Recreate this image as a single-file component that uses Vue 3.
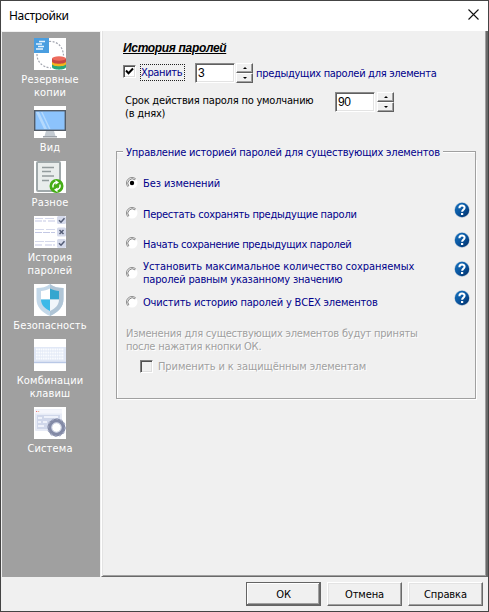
<script setup>
import { ref } from 'vue'

const sections = [
  { icon: 'backup', lines: ['Резервные', 'копии'] },
  { icon: 'view', lines: ['Вид'] },
  { icon: 'misc', lines: ['Разное'] },
  { icon: 'history', lines: ['История', 'паролей'] },
  { icon: 'security', lines: ['Безопасность'] },
  { icon: 'keys', lines: ['Комбинации', 'клавиш'] },
  { icon: 'system', lines: ['Система'] },
]
const options = [
  { lines: ['Без изменений'], cls: 'o1' },
  { lines: ['Перестать сохранять предыдущие пароли'], help: true, cls: 'o2' },
  { lines: ['Начать сохранение предыдущих паролей'], help: true, cls: 'o3' },
  { lines: ['Установить максимальное количество сохраняемых', 'паролей равным указанному значению'], help: true, cls: 'o4' },
  { lines: ['Очистить историю паролей у ВСЕХ элементов'], help: true, cls: 'o5' },
]
const selected = ref(0)
const keep = ref(true)
const keyRows = [10, 13, 16, 19]
</script>

<template>
  <div class="window">
    <header class="title">
      <span>Настройки</span>
      <svg class="close" width="11" height="11" viewBox="0 0 11 11"><path d="M.5.5l10 10M10.5.5l-10 10" stroke="#111" stroke-width="1.1" /></svg>
    </header>
    <div class="body">
      <nav class="side">
        <div v-for="s in sections" :key="s.icon" class="item">
          <svg class="pic" width="32" height="32" viewBox="0 0 32 32">
            <rect width="32" height="32" fill="#fff" />
            <g v-if="s.icon === 'backup'">
              <path d="M15 3.500C24 3 29 9 29.500 17.500M3 16C3 24 8 29 17 30" fill="none" stroke="#a3a6b0" stroke-width="1.200" stroke-dasharray="2 1.500" />
              <rect width="15" height="15" fill="#4a9ee0" />
              <path d="M5 3.500h6M2 6h6M4 8.500h6M2 11h7" stroke="#e6f3fd" stroke-width="1.300" />
              <path d="M18 25v4c0 3.500 14 3.500 14 0v-4z" fill="#2aa77a" />
              <path d="M18 22v4c0 3 14 3 14 0v-4z" fill="#f3b51b" />
              <path d="M18 20.500v3c0 3 14 3 14 0v-3z" fill="#c74743" />
              <ellipse cx="25" cy="20.500" rx="7" ry="2.200" fill="#ed6b5d" />
            </g>
            <g v-else-if="s.icon === 'view'">
              <path d="M12 25h8l1.500 5h-11z" fill="#c4cbd2" />
              <rect x="9" y="30" width="14" height="1.500" fill="#9da3aa" />
              <rect x=".7" y="4.700" width="30.600" height="19.600" fill="#8cc3fc" stroke="#535b65" stroke-width="1.400" />
              <path d="M2 6h3l8 17H10zM7 6h1.500l8 17H15z" fill="#b4d9fd" />
            </g>
            <g v-else-if="s.icon === 'misc'">
              <rect x="3" y="1" width="23" height="29" rx="1" fill="#e9edec" stroke="#9fa8aa" stroke-width="2" />
              <path d="M8 6.500h12M8 10.500h9M8 15h12M8 19.500h7" stroke="#929b9c" stroke-width="1.300" />
              <circle cx="22.500" cy="25" r="7" fill="#45ad16" />
              <path d="M19 26.500c-.5-3 1-5 3.500-5.200M26 23.500c.5 3-1 5-3.500 5.200" fill="none" stroke="#fff" stroke-width="1.500" />
              <path d="M21.500 19l3.500 2.500-3.500 2.200zM23.500 26.400l-3.500 2.300 3.500 2.500z" fill="#fff" />
            </g>
            <g v-else-if="s.icon === 'history'">
              <path d="M1 2.500h8M11 2.500h9M1 13.500h9M12 13.500h9M1 25.500h9M11 25.500h10" stroke="#d5d9ec" stroke-width="1" />
              <path d="M1 5h11M14 5h7M1 16.500h20M1 29h8M11 29h10" stroke="#c3c8e4" stroke-width="1.200" stroke-dasharray="7 1" />
              <rect x="23" y="0" width="9" height="8" rx="1.500" fill="#d5daeb" />
              <rect x="23" y="11.500" width="9" height="9" rx="1.500" fill="#d5daeb" />
              <rect x="23" y="23" width="9" height="9" rx="1.500" fill="#d5daeb" />
              <path d="M25 4.200l2 2 3.500-4M25.500 14l4 4M29.500 14l-4 4M25 27.200l2 2 3.500-4" fill="none" stroke="#545d76" stroke-width="1.500" />
            </g>
            <g v-else-if="s.icon === 'security'">
              <path d="M16 0c4 3 8 4 13.500 4v11c0 8-5 13-13.500 17C7.500 28 2.500 23 2.500 15V4C8 4 12 3 16 0z" fill="#c3d8e9" />
              <path d="M16 0c4 3 8 4 13.500 4v11c0 8-5 13-13.500 17z" fill="#b0c5d6" />
              <path d="M16 4.500c3 1.800 6 2.300 9 2.500v8.500h-9z" fill="#35a6cf" />
              <path d="M16 4.500C13 6.300 10 6.800 7 7v8.500h9z" fill="#fff" />
              <path d="M7 15.500h9V27c-5-2.500-9-6-9-11.500z" fill="#3bb9e8" />
              <path d="M25 15.500h-9V27c5-2.500 9-6 9-11.500z" fill="#f1f6fa" />
            </g>
            <g v-else-if="s.icon === 'keys'">
              <rect x="0" y="8" width="32" height="15" fill="#e1e8f6" />
              <path v-for="y in keyRows" :key="y" :d="`M2 ${y + .5}H30`" stroke="#fafcff" stroke-width="1.800" stroke-dasharray="1.700 .600" />
              <path d="M0 23.500h32" stroke="#b9c8e6" stroke-width="1.400" />
            </g>
            <g v-else>
              <rect x="1" y="2" width="27" height="22" rx="1" fill="#e7ebf6" />
              <path d="M1 4.500h27" stroke="#f5f6fc" stroke-width="4" />
              <path d="M2 4.500h1.200" stroke="#e77" /><path d="M4 4.500h1.200" stroke="#eb9" />
              <rect x="3" y="8" width="23" height="14" fill="#d0d7ea" />
              <path d="M4 11h4M10 10h14M4 15h3M9 15h4M4 19h6" stroke="#f8faff" stroke-width="1.500" />
              <circle cx="22.500" cy="20.500" r="7" fill="#f3f5fb" stroke="#838aa6" stroke-width="4" />
              <circle cx="22.500" cy="20.500" r="8.700" fill="none" stroke="#a8aec6" stroke-width="1.500" stroke-dasharray="2 2.500" />
              <circle cx="22.500" cy="20.500" r="4.800" fill="#fff" stroke="#b6bdd3" stroke-width="1" />
            </g>
          </svg>
          <div class="label"><div v-for="l in s.lines" :key="l">{{ l }}</div></div>
        </div>
      </nav>

      <main class="panel">
        <h1>История паролей</h1>
        <div class="row keep">
          <button class="check" @click="keep = !keep"><svg v-if="keep" width="9" height="9" viewBox="0 0 9 9"><path d="M1 3.500l2.500 2.700L8 1.500" fill="none" stroke="#000" stroke-width="2" /></svg></button>
          <span class="focus">Хранить</span>
          <span class="num n1">3</span>
          <span class="spin"><i class="up"></i><i class="down"></i></span>
          <span class="navy prev">предыдущих паролей для элемента</span>
        </div>
        <div class="row term">
          <div class="termtext">Срок действия пароля по умолчанию<br />(в днях)</div>
          <span class="num">90</span>
          <span class="spin s2"><i class="up"></i><i class="down"></i></span>
        </div>

        <section class="group">
          <div class="legend"><i class="lead"></i><span>Управление историей паролей для существующих элементов</span><i class="rest"></i></div>
          <div class="inner">
            <div v-for="(o, i) in options" :key="o.cls" class="option" :class="o.cls" @click="selected = i">
              <svg class="radio" width="12" height="12" viewBox="0 0 12 12">
                <circle cx="6" cy="6" r="5.500" fill="#fff" />
                <path d="M2.100 9.900A5.500 5.500 0 0 1 9.900 2.100" fill="none" stroke="#8b8b8b" />
                <path d="M2.900 9.100A4.400 4.400 0 0 1 9.100 2.900" fill="none" stroke="#666" stroke-width=".8" />
                <circle v-if="selected === i" cx="6" cy="6" r="2.200" fill="#000" />
              </svg>
              <div class="otext"><div v-for="l in o.lines" :key="l">{{ l }}</div></div>
              <svg v-if="o.help" class="help" width="16" height="16" viewBox="0 0 16 16">
                <defs><linearGradient :id="'g' + i" x1="0" y1="0" x2="1" y2="1"><stop offset="0" stop-color="#1673bf" /><stop offset=".5" stop-color="#0a56a0" /><stop offset="1" stop-color="#022c63" /></linearGradient></defs>
                <circle cx="8" cy="8" r="7.700" fill="#b9c8d8" />
                <circle cx="8" cy="8" r="7.200" :fill="`url(#g${i})`" />
                <path d="M5.400 6.200C5.400 2.800 10.600 2.800 10.600 5.800C10.600 7.700 8.100 7.600 8.100 9.800" fill="none" stroke="#fff" stroke-width="2" />
                <rect x="7" y="11" width="2.200" height="2" fill="#fff" />
              </svg>
            </div>
            <p class="note"><span>Изменения для существующих элементов будут приняты</span><br />после нажатия кнопки ОК.</p>
            <div class="protected"><span class="check off"></span><span>Применить и к защищённым элементам</span></div>
          </div>
        </section>
      </main>
    </div>
    <footer class="foot">
      <button class="btn primary">ОК</button>
      <button class="btn">Отмена</button>
      <button class="btn">Справка</button>
    </footer>
  </div>
</template>

<style>
body { margin: 0; }
</style>

<style scoped>
* { box-sizing: border-box; }
.window { width: 489px; height: 612px; background: #f0f0f0; border: 1px solid #444; display: flex; flex-direction: column; font: 11px/13px "DejaVu Sans Condensed", "DejaVu Sans", sans-serif; color: #000; overflow: hidden; }
.title { height: 30px; flex: none; background: #fff; display: flex; align-items: center; justify-content: space-between; padding: 0 9px 0 8px; font: 12px/16px "Noto Sans", sans-serif; letter-spacing: -.35px; }
.close { margin-top: -3px; }
.body { display: flex; height: 546px; flex: none; }
.side { width: 98px; flex: none; margin: 1px 0 0 1px; background: #a0a0a0; padding: 6px 2px 0 0; color: #fff; }
.item { display: flex; flex-direction: column; align-items: center; text-align: center; }
.pic { display: block; }
.label { padding: 3px 0 7px; letter-spacing: .15px; }
.panel { flex: 1; margin-left: 1px; border-left: 1px solid #fff; border-right: 2px solid #696969; border-bottom: 1px solid #696969; box-shadow: inset 1px 0 #e3e3e3, inset -1px -1px #a0a0a0; padding: 9px 10px 0 14px; }
h1 { margin: 0 0 0 7px; font: italic bold 12px/16px "Liberation Sans", sans-serif; letter-spacing: -.33px; text-decoration: underline; height: 16px; white-space: nowrap; }
.row { display: flex; white-space: nowrap; }
.keep { align-items: center; height: 20px; margin-top: 7px; padding-left: 7px; }
.check { width: 13px; height: 13px; flex: none; padding: 0; background: #fff; border: 1px solid; border-color: #808080 #fff #fff #808080; box-shadow: inset 1px 1px #505050, inset -1px -1px #dedede; display: flex; align-items: center; justify-content: center; margin-top: -3px; }
.focus { width: 45px; height: 17px; margin: -2px 0 0 4px; border: 1px dotted #222; color: #00008b; line-height: 15px; letter-spacing: -.35px; }
.num { width: 40px; height: 20px; background: #fff; border: 1px solid; border-color: #8a8a8a #fff #fff #8a8a8a; box-shadow: inset 1px 1px #606060, inset -1px -1px #e3e3e3; font: 12px/18px "Liberation Sans", sans-serif; padding-left: 2px; letter-spacing: -.4px; }
.n1 { margin-left: 10px; }
.spin { width: 17px; height: 20px; display: flex; flex-direction: column; margin-left: 1px; }
.spin i { height: 10px; background: #f0f0f0; border: 1px solid; border-color: #fff #606060 #606060 #fff; box-shadow: inset -1px -1px #a0a0a0; display: flex; align-items: center; justify-content: center; }
.spin i::after { content: ""; border: 2px solid transparent; }
.spin .up::after { border-bottom-color: #000; border-top: 0; }
.spin .down::after { border-top-color: #000; border-bottom: 0; }
.navy { color: #00008b; }
.prev { margin-left: 3px; letter-spacing: -.3px; }
.term { margin-top: 9px; padding-left: 9px; }
.termtext { width: 210px; padding-top: 2px; letter-spacing: -.2px; }
.s2 { margin-left: 2px; }
.group { width: 360px; height: 253px; margin-top: 26px; display: flex; flex-direction: column; }
.legend { height: 13px; flex: none; display: flex; color: #00008b; letter-spacing: -.2px; white-space: nowrap; }
.legend i { height: 8px; margin-top: 5px; border-top: 1px solid #a0a0a0; box-shadow: inset 0 1px #fff; }
.lead { width: 7px; border-left: 1px solid #a0a0a0; margin-right: 3px; }
.rest { flex: 1; margin-left: 3px; border-right: 1px solid #a0a0a0; }
.inner { flex: 1; border: solid #a0a0a0; border-width: 0 1px 1px; box-shadow: 1px 1px #fff, inset 1px 0 #fff; padding: 9px 5px 0 9px; color: #00008b; }
.option { display: flex; align-items: center; height: 30px; white-space: nowrap; }
.radio { margin-right: 5px; flex: none; }
.otext { flex: 1; padding-top: 2px; }
.help { flex: none; margin-top: -7px; }
.o1 { letter-spacing: -.1px; }
.o1 .otext { padding-top: 0; }
.o2 { letter-spacing: -.27px; }
.o3 { letter-spacing: -.3px; }
.o4 { letter-spacing: -.06px; height: 29px; }
.o4 .otext { padding-top: 1px; }
.o4 .otext div + div { letter-spacing: -.18px; }
.o5 { letter-spacing: -.17px; height: 29px; }
.note { margin: 11px 0 0; color: #a0a0a0; text-shadow: 1px 1px #fff; letter-spacing: -.23px; white-space: nowrap; }
.protected { display: flex; margin: 7px 0 0 14px; gap: 5px; align-items: center; color: #a0a0a0; text-shadow: 1px 1px #fff; letter-spacing: -.09px; white-space: nowrap; }
.off { background: #f0f0f0; margin-top: 0; }
.foot { flex: 1; display: flex; justify-content: flex-end; gap: 6px; padding: 5px 5px 0 0; }
.btn { width: 75px; height: 24px; padding: 0; background: #f0f0f0; border: 1px solid; border-color: #fff #696969 #696969 #fff; box-shadow: inset -1px -1px #a0a0a0, inset 1px 1px #e3e3e3; font: inherit; color: #000; letter-spacing: -.1px; }
.primary { border-color: #646464; box-shadow: inset -1px -1px #696969, inset 1px 1px #fff, inset -2px -2px #a0a0a0; }
</style>
